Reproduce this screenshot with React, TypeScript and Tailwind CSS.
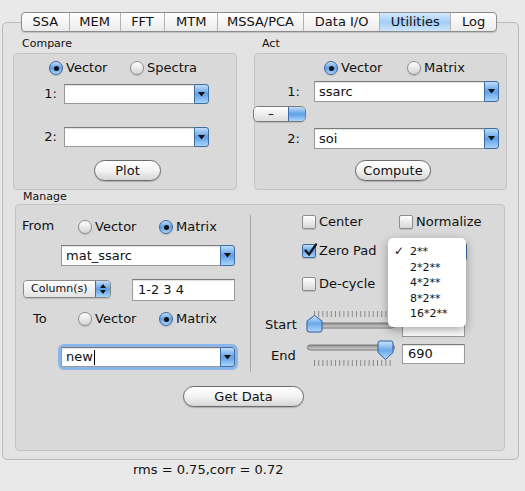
import React from "react";

const tabs: [string, string][] = [
  ["SSA", "w-[47px]"],
  ["MEM", "w-[51px]"],
  ["FFT", "w-[45px]"],
  ["MTM", "w-[53px]"],
  ["MSSA/PCA", "w-[86px]"],
  ["Data I/O", "w-[77px]"],
  ["Utilities", "w-[71px]"],
  ["Log", "w-[46px]"],
];

const aqua = "bg-linear-to-b from-[#c0ddf8] via-[#5e9fe6] to-[#a9d4fa]";

function Radio({ label, checked = false, className = "" }: { label: string; checked?: boolean; className?: string }) {
  return (
    <div className={`flex items-center ${className}`}>
      <span
        className={`flex h-[14px] w-[14px] shrink-0 items-center justify-center rounded-full border shadow-[0_1px_1px_rgba(0,0,0,0.15)] ${
          checked ? `border-[#3d669c] ${aqua}` : "border-[#8e8e8e] bg-linear-to-b from-white to-[#d4d4d4]"
        }`}
      >
        {checked && <span className="h-[5px] w-[5px] rounded-full bg-[#111]" />}
      </span>
      <span className="ml-[3px] leading-[16px]">{label}</span>
    </div>
  );
}

function Checkbox({ label, checked = false, className = "" }: { label: string; checked?: boolean; className?: string }) {
  return (
    <div className={`flex items-center ${className}`}>
      <span
        className={`relative h-[14px] w-[14px] shrink-0 rounded-[2px] border shadow-[0_1px_1px_rgba(0,0,0,0.15)] ${
          checked ? `border-[#3d669c] ${aqua}` : "border-[#8e8e8e] bg-linear-to-b from-white to-[#d8d8d8]"
        }`}
      >
        {checked && (
          <svg className="absolute -top-[2px] left-[0px]" width="15" height="15" viewBox="0 0 15 15">
            <path d="M2.5 7.5 L6 11.5 L13 1.5" fill="none" stroke="#151515" strokeWidth="2.2" strokeLinecap="round" />
          </svg>
        )}
      </span>
      <span className="ml-[3px] leading-[16px]">{label}</span>
    </div>
  );
}

function DownArrow() {
  return (
    <svg width="7" height="5" viewBox="0 0 7 5">
      <path d="M0 0 H7 L3.5 4.5 Z" fill="#111" />
    </svg>
  );
}

function Combo({ value = "", className = "", focus = false, caret = false }: { value?: string; className?: string; focus?: boolean; caret?: boolean }) {
  return (
    <div className={`flex ${focus ? "rounded-[3px] shadow-[0_0_0_3px_#8ab6ea]" : ""} ${className}`}>
      <div className="flex flex-1 items-center border border-r-0 border-[#999] border-t-[#7a7a7a] bg-white pl-[4px] shadow-[inset_0_1px_1px_rgba(0,0,0,0.12)]">
        {value}
        {caret && <span className="ml-px h-[15px] w-px bg-black" />}
      </div>
      <div className={`flex w-[15px] items-center justify-center rounded-r-[3px] border border-[#3f6ca3] ${aqua}`}>
        <DownArrow />
      </div>
    </div>
  );
}

function Field({ value = "", className = "" }: { value?: string; className?: string }) {
  return (
    <div className={`flex items-center border border-[#9c9c9c] border-t-[#7a7a7a] bg-white pl-[5px] shadow-[inset_0_1px_1px_rgba(0,0,0,0.12)] ${className}`}>
      {value}
    </div>
  );
}

function PushButton({ label, className = "" }: { label: string; className?: string }) {
  return (
    <div
      className={`flex h-[21px] items-center justify-center rounded-full border border-[#6c6c6c] bg-linear-to-b from-white via-[#f3f3f3] to-[#d6d6d6] shadow-[0_1px_1px_rgba(0,0,0,0.2)] ${className}`}
    >
      {label}
    </div>
  );
}

function Ticks({ y }: { y: number }) {
  return (
    <>
      {Array.from({ length: 19 }).map((_, i) => (
        <line key={i} x1={8.5 + i * 4.2} x2={8.5 + i * 4.2} y1={y} y2={y + 6} stroke="#8a8a8a" strokeWidth="1" />
      ))}
    </>
  );
}

function SliderDefs({ id }: { id: string }) {
  return (
    <defs>
      <linearGradient id={`${id}t`} x1="0" y1="0" x2="0" y2="1">
        <stop offset="0" stopColor="#8f8f8f" />
        <stop offset="1" stopColor="#d2d2d2" />
      </linearGradient>
      <linearGradient id={`${id}b`} x1="0" y1="0" x2="0" y2="1">
        <stop offset="0" stopColor="#cfe5fb" />
        <stop offset="0.5" stopColor="#6aa8ea" />
        <stop offset="1" stopColor="#b4dafb" />
      </linearGradient>
    </defs>
  );
}

function StartSlider() {
  return (
    <svg width="90" height="24" viewBox="0 0 90 24" className="shrink-0">
      <SliderDefs id="s" />
      <Ticks y={2} />
      <rect x="1.5" y="14" width="87" height="5" rx="2.5" fill="url(#st)" stroke="#767676" />
      <path d="M8.5 6.5 L16 12 L16 21 Q16 23 14 23 L3 23 Q1 23 1 21 L1 12 Z" fill="url(#sb)" stroke="#2f5f9e" />
    </svg>
  );
}

function EndSlider() {
  return (
    <svg width="90" height="28" viewBox="0 0 90 28" className="shrink-0">
      <SliderDefs id="e" />
      <rect x="1.5" y="6" width="87" height="5" rx="2.5" fill="url(#et)" stroke="#767676" />
      <path d="M72 4 Q72 2 74 2 L85 2 Q87 2 87 4 L87 13.5 L79.5 20.5 L72 13.5 Z" fill="url(#eb)" stroke="#2f5f9e" />
      <Ticks y={21} />
    </svg>
  );
}

function ColumnPopup() {
  return (
    <div className="mt-px ml-[7px] flex h-[18px] w-[88px] overflow-hidden rounded-[4px] border border-[#8a8a8a] shadow-[0_1px_1px_rgba(0,0,0,0.15)]">
      <div className="flex flex-1 items-center bg-linear-to-b from-white to-[#e2e2e2] pl-[7px] text-[11px]">Column(s)</div>
      <div className={`flex w-[15px] flex-col items-center justify-center gap-[2px] border-l border-[#3f6ca3] ${aqua}`}>
        <svg width="6" height="4" viewBox="0 0 6 4">
          <path d="M0 4 H6 L3 0 Z" fill="#111" />
        </svg>
        <svg width="6" height="4" viewBox="0 0 6 4">
          <path d="M0 0 H6 L3 4 Z" fill="#111" />
        </svg>
      </div>
    </div>
  );
}

const groupBox = "rounded-[4px] border border-[#c3c3c3] bg-[#d9d9d9]";

export default function App() {
  return (
    <div className="relative h-[491px] w-[525px] overflow-hidden bg-[#e9e9e9] pt-[12px] font-['DejaVu_Sans',sans-serif] text-[13px] text-[#111]">
      <div className="ml-[2px] w-[517px]">
        {/* tab strip */}
        <div className="relative z-10 ml-[19px] flex h-[20px] w-[476px] overflow-hidden rounded-[4px] border border-[#8c8c8c] bg-linear-to-b from-white to-[#ebebeb] shadow-[0_1px_1px_rgba(0,0,0,0.15)]">
          {tabs.map(([name, w], i) => (
            <div
              key={name}
              className={`flex items-center justify-center ${w} ${i > 0 ? "border-l border-[#b4b4b4]" : ""} ${
                name === "Utilities" ? "bg-linear-to-b from-[#d6eafc] via-[#a3cef6] to-[#cde6fd]" : ""
              }`}
            >
              {name}
            </div>
          ))}
        </div>

        <div className="-mt-[10px] h-[438px] rounded-[5px] border border-[#b9b9b9] bg-[#e3e3e3] pt-[13px]">
          <div className="flex gap-[17px] pl-[10px]">
            {/* Compare */}
            <div className="w-[224px]">
              <div className="h-[17px] pl-[9px] text-[11px] leading-[16px]">Compare</div>
              <div className={`h-[137px] ${groupBox}`}>
                <div className="mt-[6px] flex h-[16px] items-center pl-[35px]">
                  <Radio checked label="Vector" className="w-[81px]" />
                  <Radio label="Spectra" />
                </div>
                <div className="mt-[8px] flex items-center">
                  <span className="w-[46px] pr-[3px] text-right">1:</span>
                  <Combo className="ml-[4px] h-[20px] w-[145px]" />
                </div>
                <div className="mt-[23px] flex items-center">
                  <span className="w-[46px] pr-[3px] text-right">2:</span>
                  <Combo className="ml-[4px] h-[20px] w-[145px]" />
                </div>
                <PushButton label="Plot" className="mt-[13px] ml-[80px] w-[67px]" />
              </div>
            </div>

            {/* Act */}
            <div className="w-[253px]">
              <div className="h-[17px] pl-[8px] text-[11px] leading-[16px]">Act</div>
              <div className={`h-[137px] ${groupBox}`}>
                <div className="mt-[6px] flex h-[16px] items-center pl-[69px]">
                  <Radio checked label="Vector" className="w-[83px]" />
                  <Radio label="Matrix" />
                </div>
                <div className="mt-[5px] flex items-center">
                  <span className="w-[45px] text-right">1:</span>
                  <Combo value="ssarc" className="ml-[14px] h-[21px] w-[185px]" />
                </div>
                <div className="mt-[4px] -ml-[2px] flex h-[16px] w-[53px] overflow-hidden rounded-[5px] border border-[#7b7b7b] shadow-[0_1px_1px_rgba(0,0,0,0.15)]">
                  <div className="flex flex-1 items-center justify-center bg-linear-to-b from-white to-[#dedede] text-[12px] leading-none">–</div>
                  <div className={`w-[17px] border-l border-[#3f6ca3] ${aqua}`} />
                </div>
                <div className="mt-[6px] flex items-center">
                  <span className="w-[45px] text-right">2:</span>
                  <Combo value="soi" className="ml-[14px] h-[21px] w-[185px]" />
                </div>
                <PushButton label="Compute" className="mt-[11px] ml-[100px] w-[76px]" />
              </div>
            </div>
          </div>

          {/* Manage */}
          <div className="ml-[12px] w-[490px]">
            <div className="h-[14px] pl-[8px] text-[11px] leading-[14px]">Manage</div>
            <div className={`h-[247px] ${groupBox}`}>
              <div className="flex items-start">
                <div className="w-[234px]">
                  <div className="mt-[14px] flex h-[16px] items-center">
                    <span className="-mt-[3px] w-[62px] pl-[6px]">From</span>
                    <Radio label="Vector" className="w-[81px]" />
                    <Radio checked label="Matrix" />
                  </div>
                  <Combo value="mat_ssarc" className="mt-[10px] ml-[45px] h-[21px] w-[174px]" />
                  <div className="mt-[13px] flex items-start">
                    <ColumnPopup />
                    <Field value="1-2 3 4" className="ml-[21px] h-[22px] w-[103px]" />
                  </div>
                  <div className="mt-[10px] flex h-[16px] items-center">
                    <span className="w-[62px] pl-[17px]">To</span>
                    <Radio label="Vector" className="w-[81px]" />
                    <Radio checked label="Matrix" />
                  </div>
                  <Combo value="new" caret focus className="mt-[20px] ml-[45px] h-[20px] w-[174px]" />
                </div>

                <div className="mt-[10px] h-[157px] w-px bg-[#a8a8a8]" />

                <div className="flex-1">
                  <div className="mt-[10px] flex h-[14px] items-center pl-[51px]">
                    <Checkbox label="Center" className="w-[97px]" />
                    <Checkbox label="Normalize" />
                  </div>
                  <div className="mt-[15px] flex h-[14px] items-center pl-[51px]">
                    <Checkbox checked label="Zero Pad" className="w-[88px]" />
                    <Combo className="h-[19px] w-[77px]" />
                  </div>
                  <div className="mt-[19px] flex h-[14px] items-center pl-[51px]">
                    <Checkbox label="De-cycle" />
                  </div>
                  <div className="mt-[18px] flex h-[28px]">
                    <span className="w-[55px] pt-[6px] pl-[14px]">Start</span>
                    <StartSlider />
                    <Field className="mt-[7px] ml-[6px] h-[21px] w-[63px]" />
                  </div>
                  <div className="mt-[2px] flex h-[28px]">
                    <span className="w-[55px] pt-[7px] pl-[20px]">End</span>
                    <EndSlider />
                    <Field value="690" className="mt-[5px] ml-[6px] h-[20px] w-[63px]" />
                  </div>
                </div>
              </div>
              <PushButton label="Get Data" className="mt-[14px] ml-[167px] w-[121px]" />
            </div>
          </div>
        </div>

        <div className="mt-[2px] ml-[131px] leading-[16px]">rms = 0.75,corr = 0.72</div>
      </div>

      {/* open pop-up menu */}
      <div className="absolute top-[238px] left-[388px] h-[89px] w-[78px] rounded-[5px] bg-white pt-[6px] text-[11px] shadow-[0_3px_10px_rgba(0,0,0,0.35)]">
        {["2**", "2*2**", "4*2**", "8*2**", "16*2**"].map((item, i) => (
          <div key={item} className="relative h-[15.5px] pl-[22px] leading-[15.5px]">
            {i === 0 && <span className="absolute left-[6px] text-[12px]">✓</span>}
            {item}
          </div>
        ))}
      </div>
    </div>
  );
}
